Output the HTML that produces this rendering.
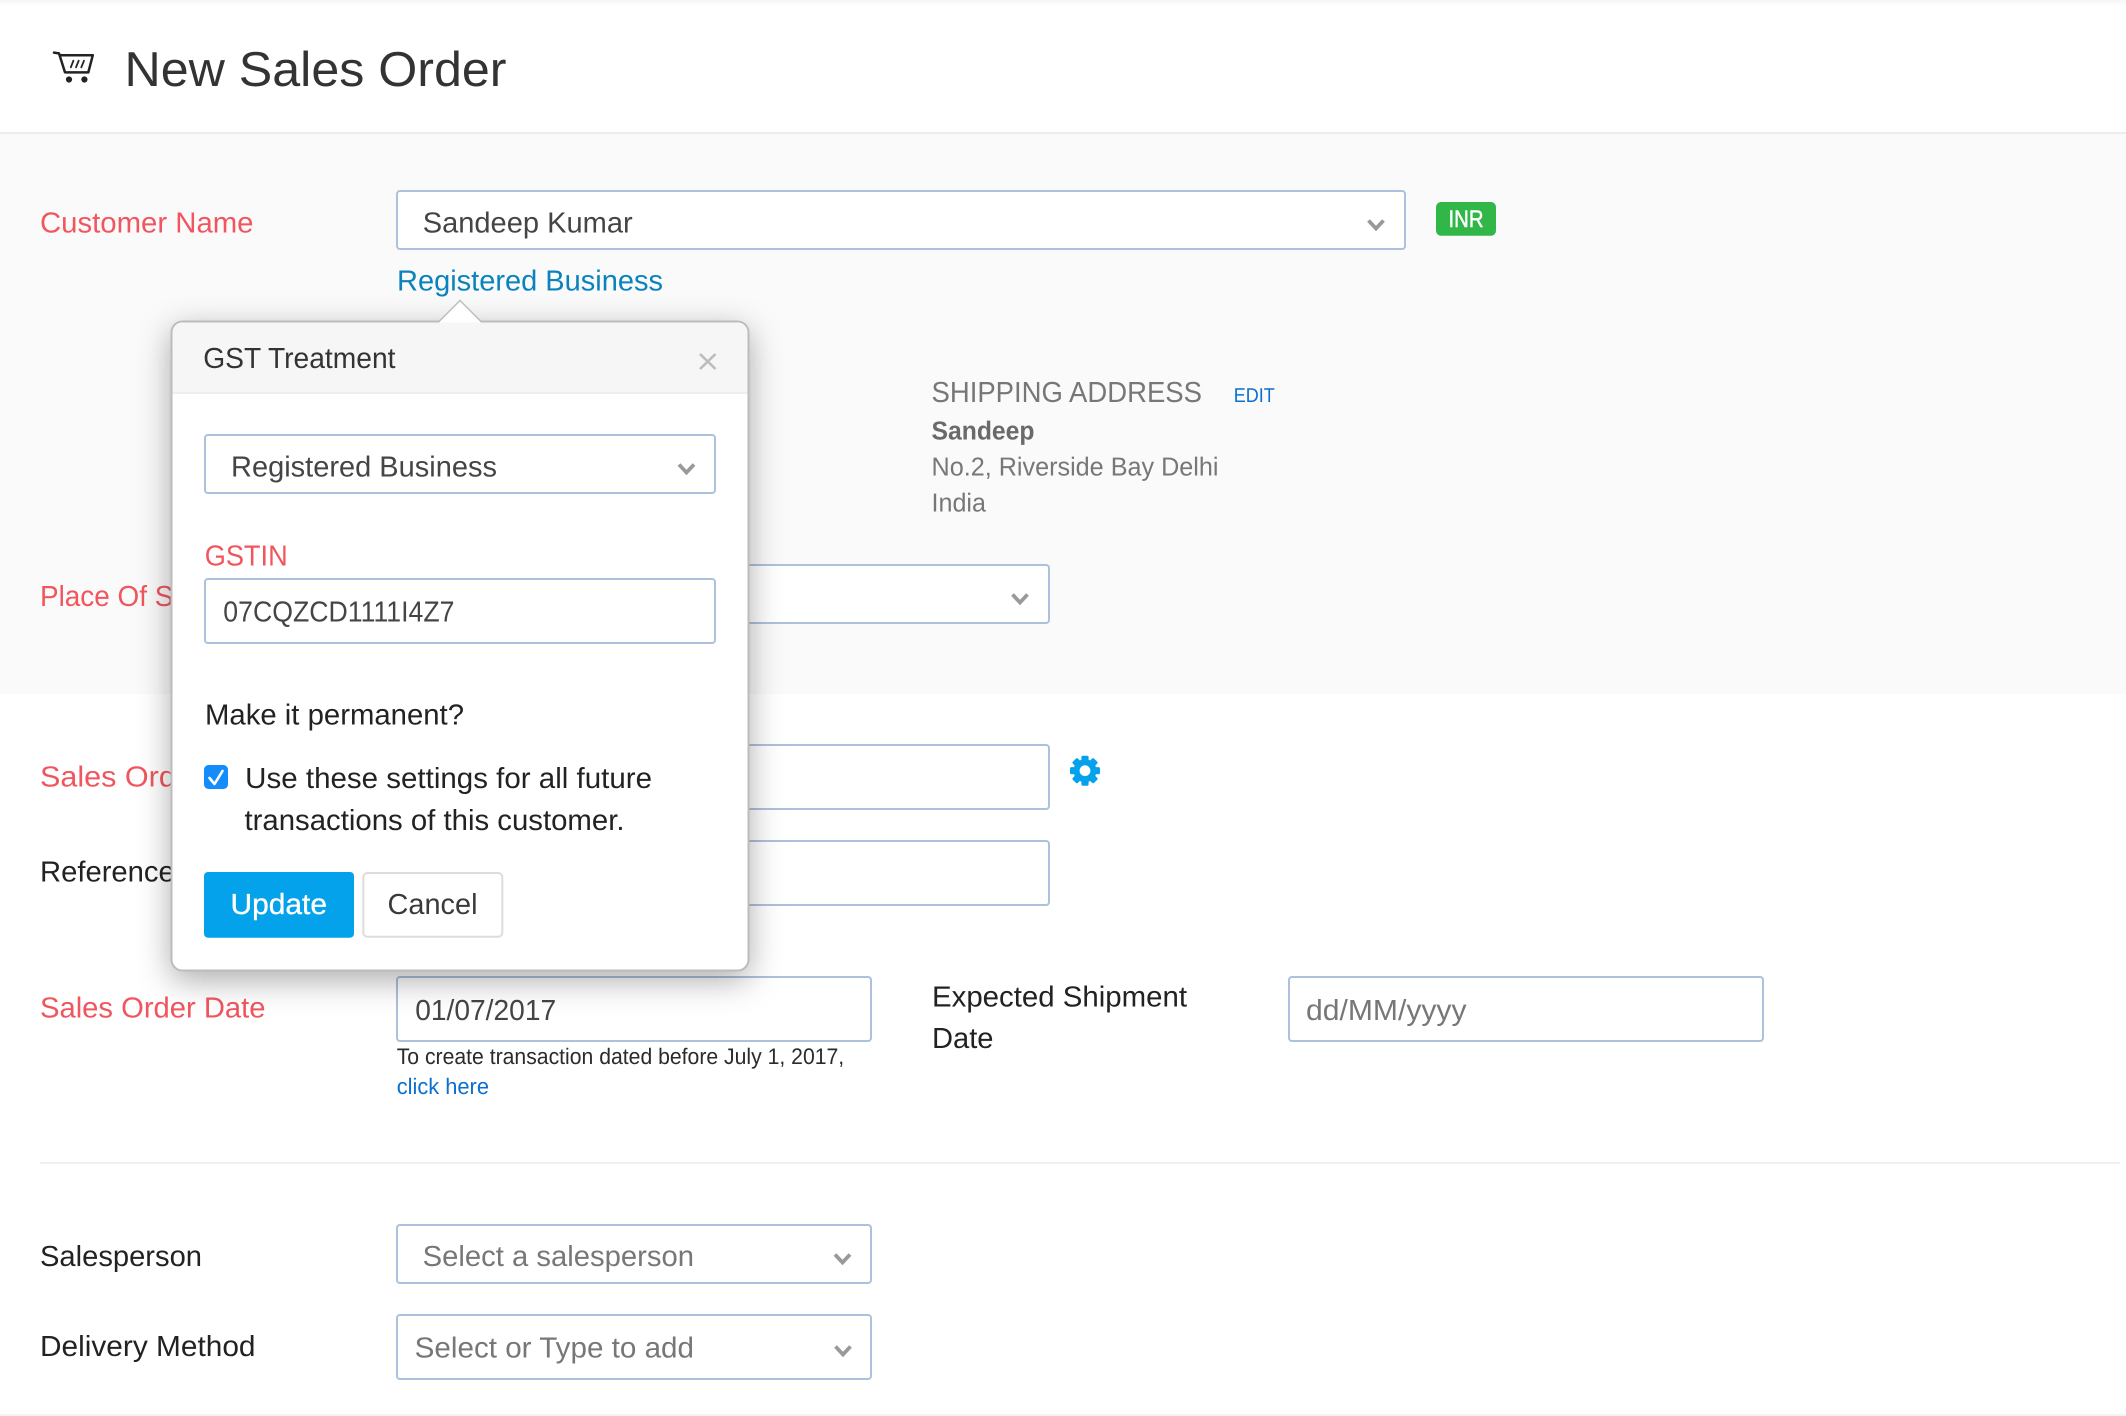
<!DOCTYPE html>
<html lang="en">
<head>
<meta charset="utf-8">
<title>New Sales Order</title>
<style>
html,body{margin:0;padding:0;background:#fff;width:2126px;height:1416px;overflow:hidden}
svg{display:block}
text{font-family:"Liberation Sans",Arial,sans-serif;font-size:29px;text-rendering:geometricPrecision}
.red{fill:#f1555e}
.dark{fill:#222}
.val{fill:#454545}
.ph{fill:#777}
.inp{fill:#fff;stroke:#adc1dc;stroke-width:2}
.chev{fill:none;stroke:#999;stroke-width:3.8;stroke-linecap:butt;stroke-linejoin:miter}
</style>
</head>
<body>
<svg xmlns="http://www.w3.org/2000/svg" width="2126" height="1416" viewBox="0 0 2126 1416">
  <defs>
    <linearGradient id="top" x1="0" y1="0" x2="0" y2="1">
      <stop offset="0" stop-color="#f5f5f5"/>
      <stop offset="1" stop-color="#ffffff"/>
    </linearGradient>
  </defs>
  <rect width="2126" height="1416" fill="#fff"/>
  <rect width="2126" height="6" fill="url(#top)"/>

  <!-- header -->
  <g fill="none" stroke="#232323" stroke-width="2.5" stroke-linejoin="round" stroke-linecap="round">
    <path d="M54 52.6 L59 53.4 L65 72.4 L88.3 72.4 L92.8 55.2 L60 55.2"/>
    <path d="M70.8 67.3 L73.4 60.7 M76 67.3 L78.7 60.7 M81.3 67.3 L84 60.7" stroke-width="1.8"/>
  </g>
  <circle cx="69" cy="79.5" r="3.1" fill="#232323"/>
  <circle cx="84.4" cy="79.5" r="3.1" fill="#232323"/>
  <text x="124.5" y="86" style="font-size:49px" fill="#333" textLength="382" lengthAdjust="spacingAndGlyphs">New Sales Order</text>

  <!-- gray section -->
  <rect x="0" y="134" width="2126" height="560" fill="#fafafa"/>
  <rect x="0" y="132" width="2126" height="2" fill="#ececec"/>

  <text class="red" x="40" y="232.3" textLength="213.5" lengthAdjust="spacingAndGlyphs">Customer Name</text>
  <rect class="inp" x="397" y="191" width="1008" height="58" rx="3"/>
  <text class="val" x="422.7" y="232.3" textLength="210" lengthAdjust="spacingAndGlyphs">Sandeep Kumar</text>
  <path class="chev" d="M1368.5 220.5 L1376 228.5 L1383.5 220.5"/>

  <rect x="1436" y="202" width="60" height="33.7" rx="5" fill="#30b748"/>
  <text x="1448.5" y="227" style="font-size:24px;stroke:#fff;stroke-width:.5" fill="#fff" textLength="35" lengthAdjust="spacingAndGlyphs">INR</text>

  <text x="397" y="290.5" fill="#0a83bd" textLength="266" lengthAdjust="spacingAndGlyphs">Registered Business</text>

  <text x="931.5" y="402" fill="#777" textLength="270.5" lengthAdjust="spacingAndGlyphs">SHIPPING ADDRESS</text>
  <text x="1233.7" y="402" style="font-size:20px" fill="#0a6fd0" textLength="41" lengthAdjust="spacingAndGlyphs">EDIT</text>
  <text x="931.5" y="439.3" style="font-size:26px;font-weight:bold" fill="#6a6a6a" textLength="103" lengthAdjust="spacingAndGlyphs">Sandeep</text>
  <text x="931.5" y="475.7" style="font-size:26px" fill="#777" textLength="287" lengthAdjust="spacingAndGlyphs">No.2, Riverside Bay Delhi</text>
  <text x="931.5" y="511.7" style="font-size:26px" fill="#777" textLength="54.5" lengthAdjust="spacingAndGlyphs">India</text>

  <text class="red" x="40" y="606" textLength="200" lengthAdjust="spacingAndGlyphs">Place Of Supply</text>
  <rect class="inp" x="397" y="565" width="652" height="58" rx="3"/>
  <path class="chev" d="M1012.5 594.5 L1020 602.5 L1027.5 594.5"/>

  <!-- white section -->
  <text class="red" x="40" y="786.3" textLength="180" lengthAdjust="spacingAndGlyphs">Sales Order#</text>
  <rect class="inp" x="397" y="745" width="652" height="64" rx="3"/>
  <g fill="#03a2ea" transform="translate(1085 770.7)">
    <circle r="11.5"/>
    <g>
      <rect x="-3.6" y="-15" width="7.2" height="8" rx="1.5"/>
      <rect x="-3.6" y="-15" width="7.2" height="8" rx="1.5" transform="rotate(45)"/>
      <rect x="-3.6" y="-15" width="7.2" height="8" rx="1.5" transform="rotate(90)"/>
      <rect x="-3.6" y="-15" width="7.2" height="8" rx="1.5" transform="rotate(135)"/>
      <rect x="-3.6" y="-15" width="7.2" height="8" rx="1.5" transform="rotate(180)"/>
      <rect x="-3.6" y="-15" width="7.2" height="8" rx="1.5" transform="rotate(225)"/>
      <rect x="-3.6" y="-15" width="7.2" height="8" rx="1.5" transform="rotate(270)"/>
      <rect x="-3.6" y="-15" width="7.2" height="8" rx="1.5" transform="rotate(315)"/>
    </g>
    <circle r="5.4" fill="#fff"/>
  </g>

  <text class="dark" x="40" y="881.7" textLength="151" lengthAdjust="spacingAndGlyphs">Reference#</text>
  <rect class="inp" x="397" y="841" width="652" height="64" rx="3"/>

  <text class="red" x="40" y="1017.5" textLength="225.5" lengthAdjust="spacingAndGlyphs">Sales Order Date</text>
  <rect class="inp" x="397" y="977" width="474" height="64" rx="3"/>
  <text class="val" x="415.2" y="1020" textLength="141" lengthAdjust="spacingAndGlyphs">01/07/2017</text>
  <text x="396.7" y="1064" style="font-size:22.5px" fill="#2b2b2b" textLength="447.5" lengthAdjust="spacingAndGlyphs">To create transaction dated before July 1, 2017,</text>
  <text x="396.7" y="1094" style="font-size:22.5px" fill="#0a6fd0" textLength="92.3" lengthAdjust="spacingAndGlyphs">click here</text>

  <text class="dark" x="932" y="1006.3" textLength="255" lengthAdjust="spacingAndGlyphs">Expected Shipment</text>
  <text class="dark" x="932" y="1048" textLength="61.5" lengthAdjust="spacingAndGlyphs">Date</text>
  <rect class="inp" x="1289" y="977" width="474" height="64" rx="3"/>
  <text class="ph" x="1306" y="1020" textLength="160.5" lengthAdjust="spacingAndGlyphs">dd/MM/yyyy</text>

  <rect x="40" y="1162" width="2080" height="2" fill="#f0f0f0"/>

  <text class="dark" x="40" y="1266" textLength="162" lengthAdjust="spacingAndGlyphs">Salesperson</text>
  <rect class="inp" x="397" y="1225" width="474" height="58" rx="3"/>
  <text class="ph" x="422.7" y="1266" textLength="271.3" lengthAdjust="spacingAndGlyphs">Select a salesperson</text>
  <path class="chev" d="M835 1254.5 L842.5 1262.5 L850 1254.5"/>

  <text class="dark" x="40" y="1356" textLength="215.5" lengthAdjust="spacingAndGlyphs">Delivery Method</text>
  <rect class="inp" x="397" y="1315" width="474" height="64" rx="3"/>
  <text class="ph" x="414.7" y="1357.5" textLength="279.3" lengthAdjust="spacingAndGlyphs">Select or Type to add</text>
  <path class="chev" d="M835.5 1346.5 L843 1354.5 L850.5 1346.5"/>

  <rect x="0" y="1414" width="2126" height="2" fill="#f3f3f3"/>

  <!-- popover -->
  <g style="filter:drop-shadow(0 9px 16px rgba(0,0,0,.32))">
    <rect x="171.5" y="321.5" width="577" height="649" rx="11" fill="#fff" stroke="#bcbcbc" stroke-width="2"/>
  </g>
  <path d="M172.5 393 V332.5 A10 10 0 0 1 182.5 322.5 H737.5 A10 10 0 0 1 747.5 332.5 V393 Z" fill="#f6f6f6"/>
  <rect x="172.5" y="392" width="575" height="2" fill="#eeeeee"/>
  <path d="M439 322.5 L460 300.5 L481 322.5 Z" fill="#fff"/>
  <path d="M438.5 322 L460 300.5 L481.5 322" fill="none" stroke="#bcbcbc" stroke-width="1.4"/>

  <text x="203.2" y="368" fill="#333" textLength="192.3" lengthAdjust="spacingAndGlyphs">GST Treatment</text>
  <path d="M700 354 L715.5 369 M715.5 354 L700 369" fill="none" stroke="#bcbcbc" stroke-width="2.6"/>

  <rect class="inp" x="205" y="435" width="510" height="58" rx="3"/>
  <text class="val" x="231" y="476.3" textLength="266" lengthAdjust="spacingAndGlyphs">Registered Business</text>
  <path class="chev" d="M679 464.5 L686.5 472.5 L694 464.5"/>

  <text class="red" x="204.7" y="565.5" textLength="83" lengthAdjust="spacingAndGlyphs">GSTIN</text>
  <rect class="inp" x="205" y="579" width="510" height="64" rx="3"/>
  <text class="val" x="223.3" y="621.7" textLength="231.2" lengthAdjust="spacingAndGlyphs">07CQZCD1111I4Z7</text>

  <text class="dark" x="205" y="724.3" textLength="259" lengthAdjust="spacingAndGlyphs">Make it permanent?</text>

  <rect x="204" y="765" width="24" height="24" rx="4.5" fill="#148dfa"/>
  <path d="M209.5 778 L214.5 784 L222.5 771" fill="none" stroke="#fff" stroke-width="2.6" stroke-linecap="round" stroke-linejoin="round"/>
  <text class="dark" x="245.2" y="788" textLength="406.8" lengthAdjust="spacingAndGlyphs">Use these settings for all future</text>
  <text class="dark" x="244.5" y="830" textLength="380" lengthAdjust="spacingAndGlyphs">transactions of this customer.</text>

  <rect x="204" y="872" width="150" height="65.7" rx="4" fill="#03a2ea"/>
  <text x="230.5" y="914" fill="#fff" style="stroke:#fff;stroke-width:.35" textLength="96.5" lengthAdjust="spacingAndGlyphs">Update</text>
  <rect x="363.3" y="873" width="139" height="63.7" rx="4" fill="#fff" stroke="#dddddd" stroke-width="2"/>
  <text x="387.5" y="914" fill="#3a3a3a" textLength="90" lengthAdjust="spacingAndGlyphs">Cancel</text>
</svg>
</body>
</html>
